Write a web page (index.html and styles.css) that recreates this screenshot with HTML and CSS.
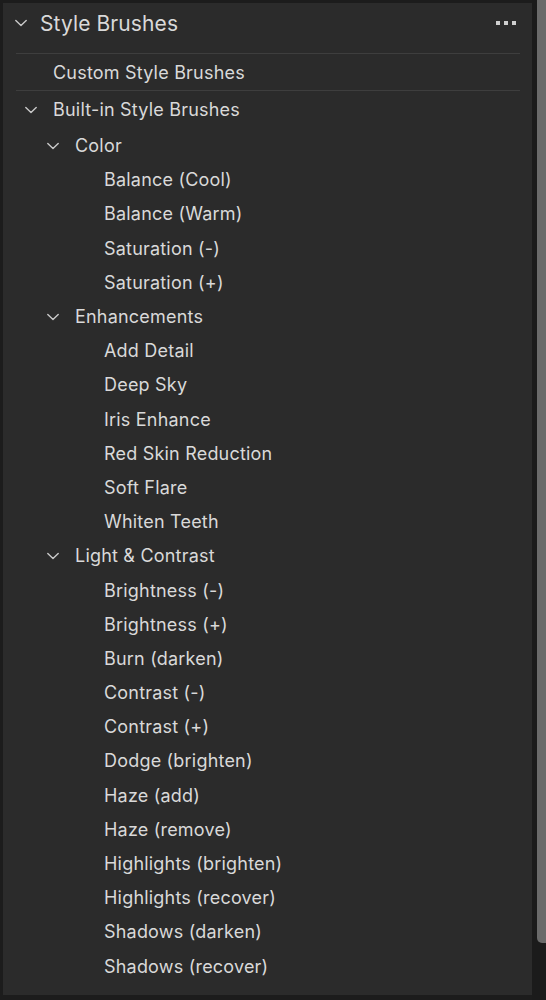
FILE: index.html
```html
<!DOCTYPE html>
<html>
<head>
<meta charset="utf-8">
<link rel="stylesheet" href="styles.css">
</head>
<body>
<div class="frame">
  <div class="panel">
    <div class="header">
      <svg class="chev" viewBox="0 0 12 12"><path d="M0.8 3.4 L6 8.6 L11.2 3.4"/></svg>
      <span class="title">Style Brushes</span>
      <div class="more"><span></span><span></span><span></span></div>
    </div>
    <div class="sep"></div>
    <div class="row custom">Custom Style Brushes</div>
    <div class="sep"></div>
    <div class="row group l1">
      <svg class="chev" viewBox="0 0 12 12"><path d="M0.8 3.4 L6 8.6 L11.2 3.4"/></svg>
      <span>Built-in Style Brushes</span>
    </div>
    <div class="row group l2">
      <svg class="chev" viewBox="0 0 12 12"><path d="M0.8 3.4 L6 8.6 L11.2 3.4"/></svg>
      <span>Color</span>
    </div>
    <div class="row leaf">Balance (Cool)</div>
    <div class="row leaf">Balance (Warm)</div>
    <div class="row leaf">Saturation (-)</div>
    <div class="row leaf">Saturation (+)</div>
    <div class="row group l2">
      <svg class="chev" viewBox="0 0 12 12"><path d="M0.8 3.4 L6 8.6 L11.2 3.4"/></svg>
      <span>Enhancements</span>
    </div>
    <div class="row leaf">Add Detail</div>
    <div class="row leaf">Deep Sky</div>
    <div class="row leaf">Iris Enhance</div>
    <div class="row leaf">Red Skin Reduction</div>
    <div class="row leaf">Soft Flare</div>
    <div class="row leaf">Whiten Teeth</div>
    <div class="row group l2">
      <svg class="chev" viewBox="0 0 12 12"><path d="M0.8 3.4 L6 8.6 L11.2 3.4"/></svg>
      <span>Light &amp; Contrast</span>
    </div>
    <div class="row leaf">Brightness (-)</div>
    <div class="row leaf">Brightness (+)</div>
    <div class="row leaf">Burn (darken)</div>
    <div class="row leaf">Contrast (-)</div>
    <div class="row leaf">Contrast (+)</div>
    <div class="row leaf">Dodge (brighten)</div>
    <div class="row leaf">Haze (add)</div>
    <div class="row leaf">Haze (remove)</div>
    <div class="row leaf">Highlights (brighten)</div>
    <div class="row leaf">Highlights (recover)</div>
    <div class="row leaf">Shadows (darken)</div>
    <div class="row leaf">Shadows (recover)</div>
  </div>
  <div class="scrollbar"><div class="thumb"></div></div>
</div>
</body>
</html>
```
FILE: styles.css
```css
html, body {
  margin: 0;
  padding: 0;
  background: #1c1c1c;
  height: 1000px;
  overflow: hidden;
}
body {
  font-family: Inter, "Noto Sans", "Liberation Sans", sans-serif;
  color: #d9d9d9;
}
*, *::before, *::after {
  box-sizing: border-box;
}
.frame {
  display: flex;
  height: 1000px;
}
.panel {
  width: 529px;
  margin: 3px 0 5px 3px;
  background: #2b2b2b;
  overflow: hidden;
  display: flex;
  flex-direction: column;
}
.scrollbar {
  width: 14px;
  background: #1b1b1b;
  display: flex;
  justify-content: flex-end;
}
.thumb {
  width: 9px;
  height: 943px;
  background: #6a6a6a;
  border-radius: 0 0 0 5px;
}
.chev {
  width: 12px;
  height: 12px;
  flex: none;
  fill: none;
  stroke: #c8c8c8;
  stroke-width: 1.4;
  stroke-linecap: round;
  stroke-linejoin: round;
}
.header {
  height: 50px;
  display: flex;
  align-items: center;
  padding: 0 16px 10px 12px;
}
.header .chev {
  margin-right: 13px;
}
.title {
  font-size: 21px;
  letter-spacing: 0.1px;
  flex: 1;
}
.more {
  display: flex;
  gap: 4px;
}
.more span {
  width: 4px;
  height: 4px;
  background: #cfcfcf;
}
.sep {
  height: 1px;
  background: #3e3e3e;
  margin: 0 12px 0 13px;
  flex: none;
}
.row {
  display: flex;
  align-items: center;
  font-size: 18px;
  letter-spacing: 0.2px;
  height: 34.2px;
  padding-top: 3px;
  flex: none;
}
.custom {
  height: 36px;
  padding-top: 1px;
  padding-left: 50px;
}
.group .chev {
  margin-right: 16px;
}
.l1 {
  height: 36px;
  padding-top: 1px;
  padding-left: 22px;
}
.l2 {
  padding-left: 44px;
}
.leaf {
  padding-left: 101px;
}
```
